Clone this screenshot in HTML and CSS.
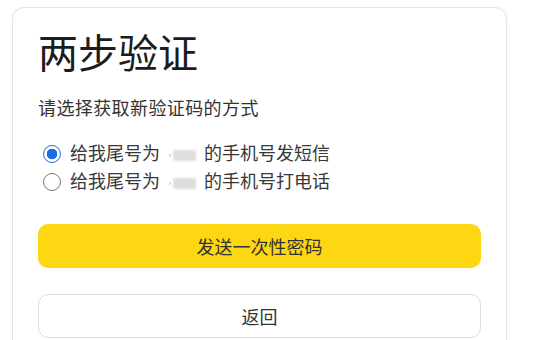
FILE: index.html
```html
<!DOCTYPE html>
<html lang="zh-CN">
<head>
<meta charset="utf-8">
<title>两步验证</title>
<link rel="stylesheet" href="styles.css">
</head>
<body>
  <main class="card">
    <h1 class="title">两步验证</h1>
    <p class="subtitle">请选择获取新验证码的方式</p>
    <form class="options">
      <label class="option">
        <input type="radio" name="method" class="radio" checked>
        <span class="label-text">给我尾号为<span class="mask"><span class="dot"></span><span class="blur"></span></span>的手机号发短信</span>
      </label>
      <label class="option">
        <input type="radio" name="method" class="radio">
        <span class="label-text">给我尾号为<span class="mask"><span class="dot"></span><span class="blur"></span></span>的手机号打电话</span>
      </label>
    </form>
    <button type="button" class="btn btn-primary">发送一次性密码</button>
    <button type="button" class="btn btn-secondary">返回</button>
  </main>
</body>
</html>
```

FILE: styles.css
```css
* {
  box-sizing: border-box;
}

html, body {
  background: #ffffff;
}

body {
  margin: 7px 0 0 12px;
  font-family: "Noto Sans CJK SC", "Noto Sans", "Liberation Sans", sans-serif;
  color: #333333;
  overflow: hidden;
}

.card {
  width: 495px;
  min-height: 400px;
  border: 1px solid #e2e2e2;
  border-radius: 12px;
  box-shadow: 0 0 3px rgba(0, 0, 0, 0.06);
  padding: 23px 25px 0 25px;
  display: flex;
  flex-direction: column;
}

.title {
  margin: 0;
  font-size: 40px;
  line-height: 40px;
  font-weight: 400;
  color: #1c1c1c;
}

.subtitle {
  margin: 24px 0 0 0;
  font-size: 18px;
  line-height: 24px;
  letter-spacing: 0.4px;
  color: #333333;
}

.options {
  margin: 21px 0 0 0;
  display: flex;
  flex-direction: column;
}

.option {
  display: flex;
  align-items: center;
  height: 28px;
  font-size: 18px;
  line-height: 28px;
  color: #383838;
}

.radio {
  appearance: none;
  -webkit-appearance: none;
  margin: 0 9px 0 5px;
  width: 18px;
  height: 18px;
  border: 1.5px solid #7a7a7a;
  border-radius: 50%;
  background: #ffffff;
  flex: none;
}

.radio:checked {
  border-color: #1a6fe0;
  background: radial-gradient(circle, #1a6fe0 0, #1a6fe0 5px, #ffffff 5.6px, #ffffff 100%);
}

.label-text {
  white-space: nowrap;
}

.mask {
  display: inline-flex;
  align-items: center;
  gap: 2px;
  margin: 0 8px 0 9px;
  vertical-align: middle;
  height: 28px;
}

.dot {
  width: 2px;
  height: 3px;
  background: #d8d8d8;
  border-radius: 1px;
}

.blur {
  width: 23px;
  height: 11px;
  background: #dedede;
  border-radius: 2px;
  filter: blur(0.8px);
}

.btn {
  display: block;
  width: 100%;
  height: 44px;
  border-radius: 10px;
  font-family: inherit;
  font-size: 18px;
  color: #333333;
  cursor: pointer;
}

.btn-primary {
  margin-top: 28px;
  background: #fcd712;
  border: none;
}

.btn-secondary {
  margin-top: 26px;
  background: #ffffff;
  border: 1px solid #dcdcdc;
}
```
